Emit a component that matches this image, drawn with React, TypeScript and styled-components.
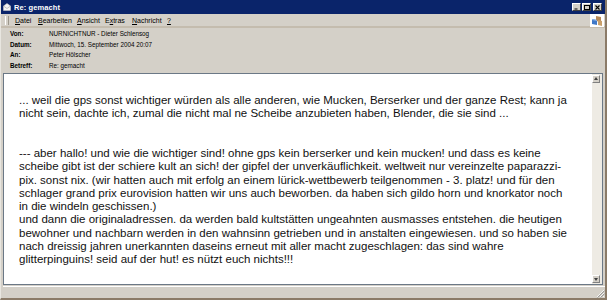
import React from "react";
import styled, { createGlobalStyle } from "styled-components";

const GlobalStyle = createGlobalStyle`
  html, body {
    margin: 0;
    padding: 0;
    background: #d4d0c8;
  }
  #root {
    width: 607px;
    height: 300px;
  }
`;

const Window = styled.div`
  width: 607px;
  height: 300px;
  box-sizing: border-box;
  display: flex;
  flex-direction: column;
  background: #d4d0c8;
  border-right: 2px solid #8b7b68;
  border-bottom: 2px solid #8b7b68;
  border-left: 1px solid #e8e6e0;
  font-family: "Liberation Sans", Arial, sans-serif;
  overflow: hidden;
`;

const TitleBar = styled.div`
  height: 14px;
  flex: none;
  display: flex;
  align-items: center;
  background: #0a246a;
  padding: 0 2px 0 2px;
  gap: 3px;
`;

const Title = styled.span`
  flex: 1;
  color: #ffffff;
  font-size: 7.5px;
  font-weight: bold;
  letter-spacing: 0.1px;
`;

const Controls = styled.div`
  display: flex;
  gap: 1px;
  margin-right: 1px;
`;

const CtrlButton = styled.div<{ $gap?: boolean }>`
  width: 9px;
  height: 8px;
  box-sizing: border-box;
  background: #d4d0c8;
  border: 1px solid;
  border-color: #ffffff #404040 #404040 #ffffff;
  display: flex;
  align-items: center;
  justify-content: center;
  margin-left: ${(p) => (p.$gap ? "1px" : "0")};
`;

const MenuBar = styled.div`
  height: 12px;
  flex: none;
  display: flex;
  align-items: center;
  border-bottom: 2px solid #c4bcae;
  padding-left: 4px;
`;

const Grip = styled.div`
  width: 2px;
  height: 9px;
  border-left: 1px solid #ffffff;
  border-right: 1px solid #9c978c;
  margin-right: 6px;
`;

const MenuItem = styled.span<{ $w: number }>`
  width: ${(p) => p.$w}px;
  font-size: 7px;
  color: #000;
  u {
    text-decoration: underline;
  }
`;

const Logo = styled.div`
  margin-left: auto;
  width: 14px;
  height: 13px;
  background: #ffffff;
  display: flex;
  align-items: center;
  justify-content: center;
  margin-top: 1px;
  margin-right: 1px;
`;

const Header = styled.div`
  flex: none;
  display: grid;
  grid-template-columns: 39px 1fr;
  padding: 1px 0 1px 9px;
  font-size: 6.3px;
  line-height: 10.7px;
  color: #000;
`;

const Label = styled.span`
  font-weight: bold;
`;

const Value = styled.span``;

const BodyFrame = styled.div`
  flex: 1;
  display: flex;
  margin: 0 2px 1px 2px;
  border: 1px solid #6b7886;
  background: #ffffff;
`;

const Content = styled.div`
  flex: 1;
  padding: 20px 0 0 15px;
  font-size: 11.5px;
  line-height: 13.3px;
  color: #111;
  white-space: nowrap;
  p {
    margin: 0;
  }
`;

const Blank = styled.div`
  height: 26.6px;
`;

const ScrollBar = styled.div`
  width: 10px;
  flex: none;
  background: #eeebe4;
  display: flex;
  flex-direction: column;
  justify-content: space-between;
  padding: 1px 1px 1px 0;
  box-sizing: border-box;
`;

const ArrowBtn = styled.div`
  width: 8px;
  height: 8px;
  box-sizing: border-box;
  background: #d4d0c8;
  border: 1px solid;
  border-color: #ffffff #808080 #808080 #ffffff;
  display: flex;
  align-items: center;
  justify-content: center;
`;

const StatusBar = styled.div`
  height: 11px;
  flex: none;
  display: flex;
  justify-content: flex-end;
  align-items: flex-end;
  border-top: 1px solid #ffffff;
  margin: 0 0 0 2px;
`;

const Arrow = ({ up }: { up?: boolean }) => (
  <svg width="4" height="3" viewBox="0 0 4 3">
    <path d={up ? "M0 3 L2 0 L4 3 Z" : "M0 0 L4 0 L2 3 Z"} fill="#404040" />
  </svg>
);

const App = () => {
  return (
    <>
      <GlobalStyle />
      <Window>
        <TitleBar>
          <svg width="8" height="8" viewBox="0 0 8 8">
            <path d="M0.5 3 L4 0.5 L7.5 3 L7.5 7.5 L0.5 7.5 Z" fill="#f4f4f4" stroke="#c8c8c8" strokeWidth="0.6" />
            <path d="M0.5 3 L4 5.5 L7.5 3" fill="none" stroke="#9a9a9a" strokeWidth="0.6" />
          </svg>
          <Title>Re: gemacht</Title>
          <Controls>
            <CtrlButton>
              <svg width="5" height="5" viewBox="0 0 5 5">
                <rect x="0.5" y="3.5" width="3" height="1" fill="#000" />
              </svg>
            </CtrlButton>
            <CtrlButton>
              <svg width="6" height="5" viewBox="0 0 6 5">
                <rect x="0.5" y="0.5" width="5" height="4" fill="none" stroke="#000" strokeWidth="1" />
              </svg>
            </CtrlButton>
            <CtrlButton $gap>
              <svg width="5" height="5" viewBox="0 0 5 5">
                <path d="M0.5 0.5 L4.5 4.5 M4.5 0.5 L0.5 4.5" stroke="#000" strokeWidth="1.1" />
              </svg>
            </CtrlButton>
          </Controls>
        </TitleBar>
        <MenuBar>
          <Grip />
          <MenuItem $w={23}><u>D</u>atei</MenuItem>
          <MenuItem $w={39}><u>B</u>earbeiten</MenuItem>
          <MenuItem $w={28}><u>A</u>nsicht</MenuItem>
          <MenuItem $w={27}>E<u>x</u>tras</MenuItem>
          <MenuItem $w={35}><u>N</u>achricht</MenuItem>
          <MenuItem $w={8}><u>?</u></MenuItem>
          <Logo>
            <svg width="12" height="12" viewBox="0 0 12 12">
              <path d="M5 1 L10 2 L10 7 L5 6 Z" fill="#b88a58" />
              <path d="M7 5 L11 6 L11 11 L7 10 Z" fill="#c9a06c" />
              <path d="M1 4 L6 5 L6 10 L1 9 Z" fill="#3f78c8" />
              <path d="M1 4 L6 5 L6 6 L1 5 Z" fill="#8fb4e6" />
            </svg>
          </Logo>
        </MenuBar>
        <Header>
          <Label>Von:</Label>
          <Value>NURNICHTNUR - Dieter Schlensog</Value>
          <Label>Datum:</Label>
          <Value>Mittwoch, 15. September 2004 20:07</Value>
          <Label>An:</Label>
          <Value>Peter Hölscher</Value>
          <Label>Betreff:</Label>
          <Value>Re: gemacht</Value>
        </Header>
        <BodyFrame>
          <Content>
            <p>
              ... weil die gps sonst wichtiger würden als alle anderen, wie Mucken, Berserker und der ganze Rest; kann ja
              <br />
              nicht sein, dachte ich, zumal die nicht mal ne Scheibe anzubieten haben, Blender, die sie sind ...
            </p>
            <Blank />
            <p>
              --- aber hallo! und wie die wichtiger sind! ohne gps kein berserker und kein mucken! und dass es keine
              <br />
              scheibe gibt ist der schiere kult an sich! der gipfel der unverkäuflichkeit. weltweit nur vereinzelte paparazzi-
              <br />
              pix. sonst nix. (wir hatten auch mit erfolg an einem lürick-wettbewerb teilgenommen - 3. platz! und für den
              <br />
              schlager grand prix eurovision hatten wir uns auch beworben. da haben sich gildo horn und knorkator noch
              <br />
              in die windeln geschissen.)
            </p>
            <p>
              und dann die originaladressen. da werden bald kultstätten ungeahnten ausmasses entstehen. die heutigen
              <br />
              bewohner und nachbarn werden in den wahnsinn getrieben und in anstalten eingewiesen. und so haben sie
              <br />
              nach dreissig jahren unerkannten daseins erneut mit aller macht zugeschlagen: das sind wahre
              <br />
              glitterpinguins! seid auf der hut! es nützt euch nichts!!!
            </p>
          </Content>
          <ScrollBar>
            <ArrowBtn>
              <Arrow up />
            </ArrowBtn>
            <ArrowBtn>
              <Arrow />
            </ArrowBtn>
          </ScrollBar>
        </BodyFrame>
        <StatusBar>
          <svg width="9" height="9" viewBox="0 0 9 9">
            <path d="M8 1 L1 8 M8 4 L4 8 M8 7 L7 8" stroke="#ffffff" strokeWidth="0.8" />
            <path d="M8.6 1.6 L1.6 8.6 M8.6 4.6 L4.6 8.6" stroke="#808080" strokeWidth="0.8" />
          </svg>
        </StatusBar>
      </Window>
    </>
  );
};

export default App;
